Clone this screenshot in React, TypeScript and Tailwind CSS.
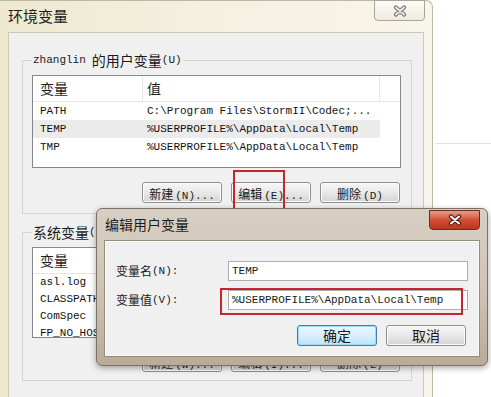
const MONO = "font-['Liberation_Mono','Noto_Sans_CJK_SC',monospace]";
const CJK = "font-['Noto_Sans_CJK_SC','Liberation_Sans',sans-serif]";

type Row = { name: string; value: string };

const userVars: Row[] = [
  { name: "PATH", value: "C:\\Program Files\\StormII\\Codec;..." },
  { name: "TEMP", value: "%USERPROFILE%\\AppData\\Local\\Temp" },
  { name: "TMP", value: "%USERPROFILE%\\AppData\\Local\\Temp" },
];

const sysVars: Row[] = [
  { name: "asl.log", value: "Destination=file" },
  { name: "CLASSPATH", value: ".;%JAVA_HOME%\\lib" },
  { name: "ComSpec", value: "%SystemRoot%\\system32\\cmd.exe" },
  { name: "FP_NO_HOST_CHECK", value: "NO" },
];

function Btn({ cn, hot, children }: { cn: string; hot?: string; children?: React.ReactNode }) {
  return (
    <div
      className={`h-[21px] w-[80px] rounded-[3px] border flex items-center justify-center text-[#1a1a1a] ${
        hot
          ? "border-[#3c7fb1] bg-gradient-to-b from-[#eaf6fd] via-[#d9effc] to-[#bfe3f7] shadow-[inset_0_0_0_1px_#9fdcf5]"
          : "border-[#8e8f8f] bg-gradient-to-b from-[#f7f7f7] via-[#e8e8e8] to-[#d5d5d5] shadow-[inset_0_0_0_1px_#fbfbfb]"
      }`}
    >
      <span className={cn}>{children}</span>
    </div>
  );
}

function Label({ zh, key2, trail }: { zh: string; key2: string; trail?: string }) {
  return (
    <>
      <span className={`${CJK} text-[12px]`}>{zh}</span>
      <span className={`${MONO} text-[11px] ml-[2px]`}>
        ({key2}){trail}
      </span>
    </>
  );
}

function ListView({ rows, rowCls, height, selected }: { rows: Row[]; rowCls: string; height: string; selected?: number }) {
  return (
    <div className={`w-[369px] ${height} border border-[#828790] bg-white overflow-hidden`}>
      <div className="flex h-[26px] border-b border-[#e5e5e5] text-[#1e1e1e]">
        <div className={`w-[110px] border-r border-[#e5e5e5] pl-[7px] flex items-center text-[14px] ${CJK}`}>变量</div>
        <div className={`w-[237px] border-r border-[#e5e5e5] pl-[4px] flex items-center text-[14px] ${CJK}`}>值</div>
      </div>
      {rows.map((r, i) => (
        <div
          key={r.name}
          className={`flex w-[347px] ${rowCls} items-center ${MONO} text-[11px] text-[#111] whitespace-nowrap ${
            i === selected ? "bg-[#ebebeb]" : ""
          }`}
        >
          <div className="w-[110px] pl-[7px] overflow-hidden">{r.name}</div>
          <div className="w-[237px] pl-[4px] overflow-hidden">{r.value}</div>
        </div>
      ))}
    </div>
  );
}

function XGlyph({ dark, light }: { dark: string; light: string }) {
  return (
    <svg width="16" height="12" viewBox="0 0 16 12">
      <path d="M4 2.5 L12 9.5 M12 2.5 L4 9.5" stroke={dark} strokeWidth="4.2" strokeLinecap="round" />
      <path d="M4 2.5 L12 9.5 M12 2.5 L4 9.5" stroke={light} strokeWidth="2" strokeLinecap="round" />
    </svg>
  );
}

export default function App() {
  return (
    <div className="relative w-[491px] h-[397px] overflow-hidden bg-white">
      {/* page behind */}
      <div className="absolute left-[435px] top-[143px] w-[56px] h-px bg-[#e4e4e4]" />

      {/* main window */}
      <div className="absolute left-0 top-0 w-[433px] h-[430px] rounded-tr-[7px] border-r border-t border-[#bdb8a6] bg-gradient-to-r from-[#eee8cf] via-[#f5f1e1] to-[#f8f5eb]">
        <div className="relative h-[31px] flex items-center pl-[8px]">
          <span className={`${CJK} text-[15px] text-[#1e1e1e]`}>环境变量</span>
          <div className="absolute right-[7px] -top-px w-[51px] h-[21px] rounded-b-[4px] border border-[#aaa594] bg-gradient-to-b from-[#fdfcf8] to-[#efebdc] flex items-center justify-center">
            <XGlyph dark="#767676" light="#e9e9e9" />
          </div>
        </div>

        <div className="ml-[8px] w-[416px] h-[400px] border border-[#cdc8b6] bg-[#f0f0f0] pt-[27px]">
          {/* user vars */}
          <div className="ml-[13px] w-[390px] border border-[#d5d5d5] pl-[9px] pb-[10px]">
            <div className="-mt-[9px] w-fit bg-[#f0f0f0] px-[1px] h-[16px] flex items-center text-[#1a1a1a]">
              <span className={`${MONO} text-[11px]`}>zhanglin</span>
              <span className={`${CJK} text-[14px] ml-[6px]`}>的用户变量</span>
              <span className={`${MONO} text-[11px]`}>(U)</span>
            </div>
            <div className="mt-[7px]">
              <ListView rows={userVars} rowCls="h-[18px]" height="h-[93px]" selected={1} />
            </div>
            <div className="mt-[14px] flex justify-end gap-[9px] pr-[11px]">
              <Btn cn="">
                <Label zh="新建" key2="N" trail="..." />
              </Btn>
              <Btn cn="">
                <Label zh="编辑" key2="E" trail="..." />
              </Btn>
              <Btn cn="">
                <Label zh="删除" key2="D" />
              </Btn>
            </div>
          </div>

          {/* system vars */}
          <div className="mt-[18px] ml-[13px] w-[390px] border border-[#d5d5d5] pl-[9px] pb-[8px]">
            <div className="-mt-[9px] w-fit bg-[#f0f0f0] px-[1px] h-[16px] flex items-center text-[#1a1a1a]">
              <span className={`${CJK} text-[14px]`}>系统变量</span>
              <span className={`${MONO} text-[11px]`}>(S)</span>
            </div>
            <div className="mt-[7px]">
              <ListView rows={sysVars} rowCls="h-[17px]" height="h-[91px]" />
            </div>
            <div className="mt-[13px] flex justify-end gap-[9px] pr-[11px]">
              <Btn cn="">
                <Label zh="新建" key2="W" trail="..." />
              </Btn>
              <Btn cn="">
                <Label zh="编辑" key2="I" trail="..." />
              </Btn>
              <Btn cn="">
                <Label zh="删除" key2="L" />
              </Btn>
            </div>
          </div>
        </div>
      </div>

      {/* highlight on edit button */}
      <div className="absolute left-[233px] top-[170px] w-[52px] h-[40px] border-2 border-[#c3262f]" />

      {/* edit dialog */}
      <div className="absolute left-[96px] top-[208px] w-[392px] h-[158px] rounded-[6px] border border-[#7b7265] bg-gradient-to-b from-[#d7cfc3] via-[#cfc5b7] to-[#b9ab97] shadow-[0_2px_6px_rgba(0,0,0,0.35)]">
        <div className="relative h-[31px] flex items-center pl-[8px]">
          <span className={`${CJK} text-[14px] text-[#1e1e1e]`}>编辑用户变量</span>
          <div className="absolute right-[7px] top-[1px] w-[51px] h-[20px] rounded-b-[4px] border border-[#6e2a1f] bg-gradient-to-b from-[#ea9a88] via-[#d44e34] to-[#bc341d] flex items-center justify-center">
            <XGlyph dark="#4b1a12" light="#ffffff" />
          </div>
        </div>
        <div className="ml-[7px] w-[376px] h-[117px] border border-[#978c7a] bg-[#f0f0f0] shadow-[inset_0_0_0_1px_#fbfbfb] pt-[20px] text-[#1a1a1a]">
          <div className="flex items-center h-[20px]">
            <div className="w-[123px] pl-[11px] flex items-center">
              <span className={`${CJK} text-[12px]`}>变量名</span>
              <span className={`${MONO} text-[11px]`}>(N):</span>
            </div>
            <div className={`w-[240px] h-[20px] border border-[#abadb3] bg-white pl-[3px] flex items-center ${MONO} text-[11px]`}>
              TEMP
            </div>
          </div>
          <div className="mt-[9px] flex items-center h-[20px]">
            <div className="w-[123px] pl-[11px] flex items-center">
              <span className={`${CJK} text-[12px]`}>变量值</span>
              <span className={`${MONO} text-[11px]`}>(V):</span>
            </div>
            <div className={`w-[240px] h-[20px] border border-[#abadb3] bg-white pl-[3px] flex items-center whitespace-nowrap overflow-hidden ${MONO} text-[11px]`}>
              %USERPROFILE%\AppData\Local\Temp
            </div>
          </div>
          <div className="mt-[15px] flex justify-end gap-[9px] pr-[13px]">
            <Btn cn={`${CJK} text-[14px]`} hot="1">
              确定
            </Btn>
            <Btn cn={`${CJK} text-[14px]`}>取消</Btn>
          </div>
        </div>
        {/* highlight on value field */}
        <div className="absolute left-[123px] top-[79px] w-[243px] h-[27px] border-2 border-[#c3262f]" />
      </div>
    </div>
  );
}
